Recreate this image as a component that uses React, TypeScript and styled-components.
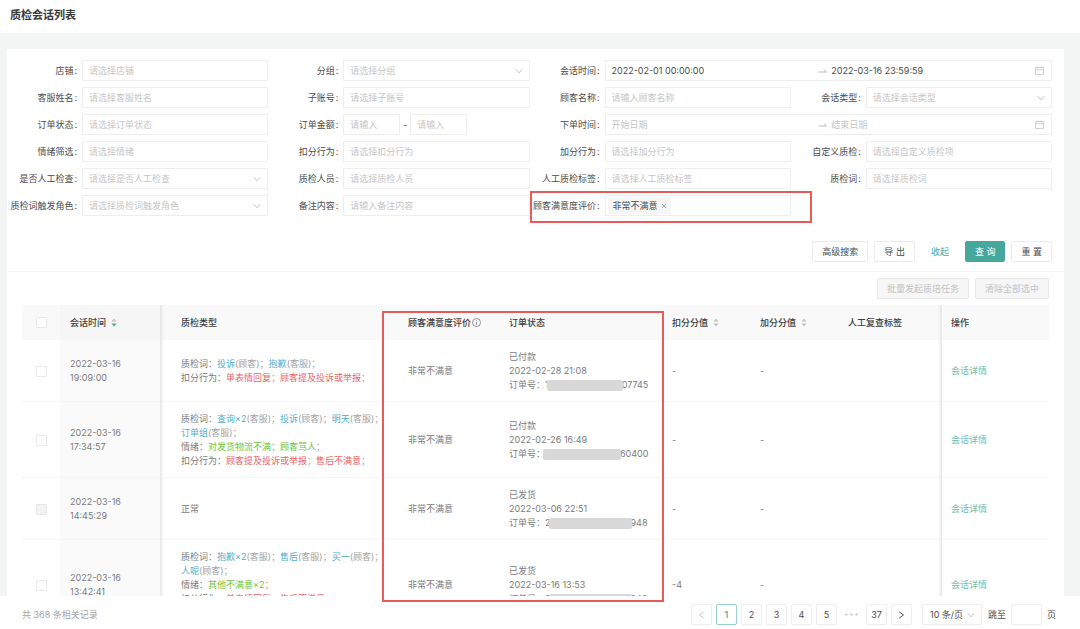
import React, { useId } from "react";
import styled, { createGlobalStyle, css } from "styled-components";

const color = {
  teal: "#46a79d",
  link: "#6fbcae",
  text: "#4c4c4c",
  heading: "#404040",
  muted: "#7c7c7c",
  faint: "#a4a4a4",
  placeholder: "#c6c6c6",
  border: "#eeeeee",
  line: "#f5f5f5",
  canvas: "#f3f4f4",
  mark: "#ea5a5a",
  blue: "#4fb0ce",
  green: "#6cc53c",
  red: "#ec6464",
};

const GlobalStyle = createGlobalStyle`
  *, *::before, *::after { box-sizing: border-box; }
  body { margin: 0; background: #fff; }
  body, button, input, select {
    font-family: Inter, "Noto Sans CJK SC", sans-serif;
    font-size: 9px;
    line-height: 14px;
    color: ${color.text};
  }
`;

const Page = styled.div`
  position: relative;
  display: flex;
  flex-direction: column;
  height: 100vh;
`;

const TitleBar = styled.header`
  flex: none;
  display: flex;
  align-items: center;
  height: 33px;
  padding: 0 10px 4px;
`;

const Title = styled.h1`
  margin: 0;
  font-size: 11px;
  line-height: 16px;
  font-weight: 700;
  color: #3a3a3a;
`;

const Content = styled.main`
  flex: 1;
  min-height: 0;
  overflow: auto;
  scrollbar-width: none;
  padding: 16px 16px 0 7px;
  background: ${color.canvas};
`;

const Panel = styled.section`
  background: #fff;
`;

const Filters = styled.form`
  padding: 11px 12px 9px 0;
  border-bottom: 1px solid ${color.line};
`;

const FieldGrid = styled.div`
  display: grid;
  grid-template-columns: repeat(4, minmax(0, 1fr));
  row-gap: 6px;
`;

const Field = styled.div<{ $span?: number }>`
  position: relative;
  grid-column: span ${(p) => p.$span ?? 1};
  display: flex;
  align-items: center;
  height: 21px;
`;

const FieldLabel = styled.label`
  flex: none;
  width: 75px;
  padding-right: 5px;
  text-align: right;
  white-space: nowrap;

  &::after {
    content: ":";
    margin-left: 1px;
  }
`;

const box = css`
  height: 21px;
  border: 1px solid ${color.border};
  border-radius: 1px;
  background: #fff;
`;

const TextBox = styled.input<{ $width?: number }>`
  ${box}
  flex: ${(p) => (p.$width ? "none" : "1")};
  width: ${(p) => (p.$width ? `${p.$width}px` : "auto")};
  min-width: 0;
  padding: 0 6px;
  outline: none;

  &::placeholder {
    color: ${color.placeholder};
  }
`;

const SelectWrap = styled.div<{ $width?: number }>`
  position: relative;
  flex: ${(p) => (p.$width ? "none" : "1")};
  width: ${(p) => (p.$width ? `${p.$width}px` : "auto")};
  min-width: 0;
  display: flex;

  svg {
    position: absolute;
    right: 7px;
    top: 7px;
    pointer-events: none;
  }
`;

const SelectBox = styled.select<{ $filled?: boolean }>`
  ${box}
  appearance: none;
  width: 100%;
  padding: 0 ${(p) => (p.$filled ? 7 : 6)}px;
  outline: none;
  color: ${(p) => (p.$filled ? color.text : color.placeholder)};
`;

const RangeDash = styled.span`
  width: 10px;
  text-align: center;
`;

const RangeBox = styled.div`
  ${box}
  flex: 1;
  display: flex;
  align-items: center;
  padding: 0 7px 0 6px;
`;

const RangeInput = styled.input`
  flex: 1;
  min-width: 0;
  padding: 0;
  border: 0;
  outline: none;
  background: none;

  &::placeholder {
    color: ${color.placeholder};
  }
`;

const RangeArrow = styled.span`
  display: flex;
  width: 16px;
  padding-left: 3px;
`;

const TagBox = styled.div`
  ${box}
  flex: 1;
  min-width: 0;
  display: flex;
  align-items: center;
  padding: 0 2px;
`;

const Tag = styled.span`
  flex: none;
  display: flex;
  align-items: center;
  gap: 3px;
  height: 17px;
  padding: 0 4px 0 5px;
  background: #f6f6f6;
`;

const TagClose = styled.button`
  display: flex;
  padding: 0;
  border: 0;
  background: none;
`;

const FieldMark = styled.span`
  position: absolute;
  top: -4px;
  left: 0;
  width: 108%;
  height: 32px;
  border: 2px solid ${color.mark};
  pointer-events: none;
`;

const ColumnMark = styled.span`
  position: absolute;
  z-index: 2;
  top: 311px;
  bottom: 27px;
  left: 382px;
  width: 282px;
  border: 2px solid ${color.mark};
  pointer-events: none;
`;

const Actions = styled.div<{ $top: number }>`
  display: flex;
  justify-content: flex-end;
  align-items: center;
  gap: 6px;
  padding-top: ${(p) => p.$top}px;
`;

const Button = styled.button<{ $kind?: "primary" | "text" }>`
  height: 21px;
  padding: 0 9px;
  border: 1px solid #ebebeb;
  border-radius: 2px;
  background: #fff;
  white-space: nowrap;

  &:disabled {
    background: #f6f6f6;
    border-color: #e8e8e8;
    color: #c2c2c2;
  }

  ${(p) =>
    p.$kind === "primary" &&
    css`
      background: ${color.teal};
      border-color: ${color.teal};
      color: #fff;
    `}

  ${(p) =>
    p.$kind === "text" &&
    css`
      border-color: transparent;
      color: ${color.teal};
    `}
`;

const TableArea = styled.div`
  padding: 0 15px;
`;

const Table = styled.table`
  width: 100%;
  margin-top: 6px;
  border-collapse: separate;
  border-spacing: 0;
  table-layout: fixed;
  color: ${color.muted};
`;

const pinned = {
  left: css`
    z-index: 1;

    &::after {
      content: "";
      position: absolute;
      top: 0;
      bottom: -1px;
      right: -3px;
      width: 4px;
      background: linear-gradient(to right, #e6e6e6, rgba(255, 255, 255, 0));
    }
  `,
  right: css`
    z-index: 1;

    &::after {
      content: "";
      position: absolute;
      top: 0;
      bottom: -1px;
      left: -3px;
      width: 4px;
      background: linear-gradient(to left, #e6e6e6, rgba(255, 255, 255, 0));
    }
  `,
};

type CellProps = { $pin?: "left" | "right"; $indent?: boolean; $center?: boolean };

const cell = css<CellProps>`
  position: relative;
  text-align: ${(p) => (p.$center ? "center" : "left")};
  vertical-align: middle;
  white-space: nowrap;
  ${(p) => p.$pin && pinned[p.$pin]}
`;

const HeadCell = styled.th<CellProps>`
  ${cell}
  height: 35px;
  padding: 0 0 0 ${(p) => (p.$center ? 0 : p.$indent ? 20 : 10)}px;
  background: ${(p) => (p.$pin === "left" ? "#f6f6f6" : "#f9f9f9")};
  color: ${color.heading};
  font-weight: 500;
`;

const Cell = styled.td<CellProps>`
  ${cell}
  padding: 10px 0 9px ${(p) => (p.$center ? 0 : p.$indent ? 20 : 10)}px;
  background: ${(p) => (p.$pin === "left" ? "#fafafa" : "#fff")};
  border-bottom: 1px solid ${color.line};
`;

const HeadLabel = styled.span<{ $gap?: number }>`
  display: inline-flex;
  align-items: center;
  gap: ${(p) => p.$gap ?? 5}px;
`;

const Check = styled.input`
  appearance: none;
  display: block;
  width: 11px;
  height: 11px;
  margin: 0 auto;
  border: 1px solid #e9e9e9;
  border-radius: 1px;
  background: #fff;

  &:disabled {
    background: #f3f3f3;
  }
`;

const Word = styled.span<{ $tone: Tone }>`
  color: ${(p) => color[p.$tone]};
`;

const Redacted = styled.span<{ $width: number }>`
  position: relative;
  display: inline-block;
  width: ${(p) => p.$width}px;
  height: 11px;
  margin: 0 -1px 0 -2px;
  border-radius: 2px;
  background: #d8d8d8;
  vertical-align: middle;
`;

const DetailLink = styled.a`
  color: ${color.link};
  text-decoration: none;
`;

const Footer = styled.footer`
  flex: none;
  display: flex;
  align-items: center;
  justify-content: space-between;
  height: 33px;
  padding: 4px 24px 0 22px;
  background: #fff;
`;

const Total = styled.span`
  color: ${color.faint};
`;

const Pager = styled.nav`
  display: flex;
  align-items: center;
  gap: 4px;
`;

const PageButton = styled.button<{ $active?: boolean }>`
  display: flex;
  align-items: center;
  justify-content: center;
  width: 21px;
  height: 21px;
  padding: 0;
  border: 1px solid ${(p) => (p.$active ? "#9bd0c9" : "#eeeeee")};
  border-radius: 2px;
  background: #fff;
  color: ${(p) => (p.$active ? color.teal : color.text)};
  font-weight: ${(p) => (p.$active ? 500 : 400)};
`;

const Ellipsis = styled.span`
  display: flex;
  justify-content: center;
  width: 21px;
`;

const Jump = styled.div`
  display: flex;
  align-items: center;
  gap: 6px;
  padding-left: 6px;
`;

const JumpLabel = styled.label`
  display: flex;
  align-items: center;
  gap: 5px;
`;

const Chevron = () => (
  <svg width="8" height="8" viewBox="0 0 8 8" fill="none" stroke="#c4c4c4" aria-hidden="true">
    <path d="M0.8 2.2 4 5.9 7.2 2.2" />
  </svg>
);

const Calendar = () => (
  <svg width="9" height="9" viewBox="0 0 9 9" fill="none" stroke="#c4c4c4" strokeWidth="0.8" aria-hidden="true">
    <path d="M0.5 1.5h8v7h-8zM0.5 3.8h8M2.7 0.4v2M6.3 0.4v2" />
  </svg>
);

const Arrow = () => (
  <svg width="9" height="6" viewBox="0 0 9 6" fill="none" stroke="#b5b5b5" strokeWidth="0.9" aria-hidden="true">
    <path d="M0.5 4H8.4L5.9 1.7" />
  </svg>
);

const Cross = () => (
  <svg width="6" height="6" viewBox="0 0 6 6" fill="none" stroke="#9c9c9c" strokeWidth="0.8" aria-hidden="true">
    <path d="M1 1 5 5M5 1 1 5" />
  </svg>
);

const Info = () => (
  <svg width="9" height="9" viewBox="0 0 9 9" fill="none" stroke="#6a6a6a" strokeWidth="0.7" aria-hidden="true">
    <circle cx="4.5" cy="4.5" r="4" />
    <path d="M4.5 3.9v2.7M4.5 2.2v0.9" />
  </svg>
);

const Sorter = ({ descending }: { descending?: boolean }) => (
  <svg width="6" height="9" viewBox="0 0 6 9" aria-hidden="true">
    <path d="M3 0.6 5.6 3.6H0.4z" fill="#c4c4c4" />
    <path d="M3 8.4 5.6 5.4H0.4z" fill={descending ? "#3fae9c" : "#c4c4c4"} />
  </svg>
);

const Angle = ({ next }: { next?: boolean }) => (
  <svg width="7" height="8" viewBox="0 0 7 8" fill="none" stroke={next ? "#555" : "#c9c9c9"} aria-hidden="true">
    <path d={next ? "M1.3 1 5.5 4 1.3 7" : "M5.7 1 1.5 4 5.7 7"} />
  </svg>
);

const Dots = () => (
  <svg width="13" height="3" viewBox="0 0 13 3" fill="#c2c2c2" aria-hidden="true">
    <circle cx="1.5" cy="1.5" r="1.1" />
    <circle cx="6.5" cy="1.5" r="1.1" />
    <circle cx="11.5" cy="1.5" r="1.1" />
  </svg>
);

type Control =
  | { kind: "text" | "select"; label: string; hint: string }
  | { kind: "amount"; label: string; hint: string }
  | { kind: "range"; label: string; start?: string; end?: string }
  | { kind: "tags"; label: string; tags: string[] };

const controls: Control[] = [
  { kind: "text", label: "店铺", hint: "请选择店铺" },
  { kind: "select", label: "分组", hint: "请选择分组" },
  { kind: "range", label: "会话时间", start: "2022-02-01 00:00:00", end: "2022-03-16 23:59:59" },
  { kind: "text", label: "客服姓名", hint: "请选择客服姓名" },
  { kind: "text", label: "子账号", hint: "请选择子账号" },
  { kind: "text", label: "顾客名称", hint: "请输入顾客名称" },
  { kind: "select", label: "会话类型", hint: "请选择会话类型" },
  { kind: "text", label: "订单状态", hint: "请选择订单状态" },
  { kind: "amount", label: "订单金额", hint: "请输入" },
  { kind: "range", label: "下单时间" },
  { kind: "text", label: "情绪筛选", hint: "请选择情绪" },
  { kind: "text", label: "扣分行为", hint: "请选择扣分行为" },
  { kind: "text", label: "加分行为", hint: "请选择加分行为" },
  { kind: "text", label: "自定义质检", hint: "请选择自定义质检项" },
  { kind: "select", label: "是否人工检查", hint: "请选择是否人工检查" },
  { kind: "text", label: "质检人员", hint: "请选择质检人员" },
  { kind: "text", label: "人工质检标签", hint: "请选择人工质检标签" },
  { kind: "text", label: "质检词", hint: "请选择质检词" },
  { kind: "select", label: "质检词触发角色", hint: "请选择质检词触发角色" },
  { kind: "text", label: "备注内容", hint: "请输入备注内容" },
  { kind: "tags", label: "顾客满意度评价", tags: ["非常不满意"] },
];

const FilterField = ({ control }: { control: Control }) => {
  const id = useId();
  return (
    <Field $span={control.kind === "range" ? 2 : 1}>
      <FieldLabel htmlFor={id}>{control.label}</FieldLabel>
      {control.kind === "text" && <TextBox id={id} placeholder={control.hint} />}
      {control.kind === "select" && (
        <SelectWrap>
          <SelectBox id={id} defaultValue="">
            <option value="">{control.hint}</option>
          </SelectBox>
          <Chevron />
        </SelectWrap>
      )}
      {control.kind === "amount" && (
        <>
          <TextBox id={id} $width={57} placeholder={control.hint} />
          <RangeDash>-</RangeDash>
          <TextBox $width={57} placeholder={control.hint} aria-label="最高订单金额" />
        </>
      )}
      {control.kind === "range" && (
        <RangeBox>
          <RangeInput id={id} defaultValue={control.start} placeholder="开始日期" />
          <RangeArrow>
            <Arrow />
          </RangeArrow>
          <RangeInput defaultValue={control.end} placeholder="结束日期" aria-label={`${control.label}结束`} />
          <Calendar />
        </RangeBox>
      )}
      {control.kind === "tags" && (
        <>
          <TagBox>
            {control.tags.map((tag) => (
              <Tag key={tag}>
                {tag}
                <TagClose type="button" aria-label={`移除${tag}`}>
                  <Cross />
                </TagClose>
              </Tag>
            ))}
            <RangeInput id={id} />
          </TagBox>
          <FieldMark />
        </>
      )}
    </Field>
  );
};

type Tone = "muted" | "faint" | "blue" | "green" | "red";
type Piece = [string, Tone?];

interface Row {
  time: [string, string];
  quality: Piece[][];
  status: string;
  orderTime: string;
  order: { head: string; tail: string; hidden: number };
  minus: string;
  disabled?: boolean;
}

const rows: Row[] = [
  {
    time: ["2022-03-16", "19:09:00"],
    quality: [
      [["质检词："], ["投诉", "blue"], ["(顾客)；", "faint"], ["抱歉", "blue"], ["(客服)；", "faint"]],
      [["扣分行为："], ["单表情回复", "red"], ["；", "faint"], ["顾客提及投诉或举报", "red"], ["；", "faint"]],
    ],
    status: "已付款",
    orderTime: "2022-02-28 21:08",
    order: { head: "1", tail: "07745", hidden: 76 },
    minus: "-",
  },
  {
    time: ["2022-03-16", "17:34:57"],
    quality: [
      [["质检词："], ["查询×2", "blue"], ["(客服)；", "faint"], ["投诉", "blue"], ["(顾客)；", "faint"], ["明天", "blue"], ["(客服)；", "faint"]],
      [["订单组", "blue"], ["(客服)；", "faint"]],
      [["情绪："], ["对发货物流不满", "green"], ["；", "faint"], ["顾客骂人", "green"], ["；", "faint"]],
      [["扣分行为："], ["顾客提及投诉或举报", "red"], ["；", "faint"], ["售后不满意", "red"], ["；", "faint"]],
    ],
    status: "已付款",
    orderTime: "2022-02-26 16:49",
    order: { head: "", tail: "60400", hidden: 78 },
    minus: "-",
  },
  {
    time: ["2022-03-16", "14:45:29"],
    quality: [[["正常"]]],
    status: "已发货",
    orderTime: "2022-03-06 22:51",
    order: { head: "2", tail: "948", hidden: 83 },
    minus: "-",
    disabled: true,
  },
  {
    time: ["2022-03-16", "13:42:41"],
    quality: [
      [["质检词："], ["抱歉×2", "blue"], ["(客服)；", "faint"], ["售后", "blue"], ["(客服)；", "faint"], ["买一", "blue"], ["(顾客)；", "faint"]],
      [["人呢", "blue"], ["(顾客)；", "faint"]],
      [["情绪："], ["其他不满意×2", "green"], ["；", "faint"]],
      [["扣分行为："], ["单表情回复", "red"], ["；", "faint"], ["售后不满意", "red"], ["；", "faint"]],
      [["加分行为："], ["主动问候", "green"], ["；", "faint"]],
    ],
    status: "已发货",
    orderTime: "2022-03-16 13:53",
    order: { head: "2", tail: "948", hidden: 83 },
    minus: "-4",
  },
];

const columnWidths = [38, 101, 237, 101, 163, 88, 88, undefined, 108];

const SessionRow = ({ row }: { row: Row }) => (
  <tr>
    <Cell $center>
      <Check type="checkbox" disabled={row.disabled} aria-label={`选择 ${row.time.join(" ")}`} />
    </Cell>
    <Cell $pin="left">
      {row.time[0]}
      <br />
      {row.time[1]}
    </Cell>
    <Cell $indent>
      {row.quality.map((line, i) => (
        <div key={i}>
          {line.map(([text, tone], j) => (
            <Word key={j} $tone={tone ?? "muted"}>
              {text}
            </Word>
          ))}
        </div>
      ))}
    </Cell>
    <Cell>非常不满意</Cell>
    <Cell>
      <div>{row.status}</div>
      <div>{row.orderTime}</div>
      <div>
        订单号：{row.order.head}
        <Redacted $width={row.order.hidden} />
        {row.order.tail}
      </div>
    </Cell>
    <Cell>{row.minus}</Cell>
    <Cell>-</Cell>
    <Cell />
    <Cell $pin="right">
      <DetailLink href="#detail">会话详情</DetailLink>
    </Cell>
  </tr>
);

export default function App() {
  return (
    <Page>
      <GlobalStyle />
      <TitleBar>
        <Title>质检会话列表</Title>
      </TitleBar>
      <Content>
        <Panel>
          <Filters onSubmit={(e) => e.preventDefault()}>
            <FieldGrid>
              {controls.map((control) => (
                <FilterField key={control.label} control={control} />
              ))}
            </FieldGrid>
            <Actions $top={25}>
              <Button type="button">高级搜索</Button>
              <Button type="button">导 出</Button>
              <Button type="button" $kind="text">收起</Button>
              <Button type="submit" $kind="primary">查 询</Button>
              <Button type="reset">重 置</Button>
            </Actions>
          </Filters>
          <TableArea>
            <Actions $top={6}>
              <Button type="button" disabled>批量发起质培任务</Button>
              <Button type="button" disabled>清除全部选中</Button>
            </Actions>
            <Table>
              <colgroup>
                {columnWidths.map((width, i) => (
                  <col key={i} width={width} />
                ))}
              </colgroup>
              <thead>
                <tr>
                  <HeadCell $center>
                    <Check type="checkbox" aria-label="全选" />
                  </HeadCell>
                  <HeadCell $pin="left">
                    <HeadLabel>会话时间<Sorter descending /></HeadLabel>
                  </HeadCell>
                  <HeadCell $indent>质检类型</HeadCell>
                  <HeadCell>
                    <HeadLabel $gap={1}>顾客满意度评价<Info /></HeadLabel>
                  </HeadCell>
                  <HeadCell>订单状态</HeadCell>
                  <HeadCell>
                    <HeadLabel>扣分分值<Sorter /></HeadLabel>
                  </HeadCell>
                  <HeadCell>
                    <HeadLabel>加分分值<Sorter /></HeadLabel>
                  </HeadCell>
                  <HeadCell>人工复查标签</HeadCell>
                  <HeadCell $pin="right">操作</HeadCell>
                </tr>
              </thead>
              <tbody>
                {rows.map((row) => (
                  <SessionRow key={row.time[1]} row={row} />
                ))}
              </tbody>
            </Table>
          </TableArea>
        </Panel>
      </Content>
      <Footer>
        <Total>共 368 条相关记录</Total>
        <Pager aria-label="分页">
          <PageButton type="button" disabled aria-label="上一页"><Angle /></PageButton>
          <PageButton type="button" $active>1</PageButton>
          <PageButton type="button">2</PageButton>
          <PageButton type="button">3</PageButton>
          <PageButton type="button">4</PageButton>
          <PageButton type="button">5</PageButton>
          <Ellipsis><Dots /></Ellipsis>
          <PageButton type="button">37</PageButton>
          <PageButton type="button" aria-label="下一页"><Angle next /></PageButton>
          <Jump>
            <SelectWrap $width={60}>
              <SelectBox $filled defaultValue="10" aria-label="每页条数">
                <option value="10">10 条/页</option>
              </SelectBox>
              <Chevron />
            </SelectWrap>
            <JumpLabel>
              跳至
              <TextBox $width={31} />
              页
            </JumpLabel>
          </Jump>
        </Pager>
      </Footer>
      <ColumnMark />
    </Page>
  );
}
